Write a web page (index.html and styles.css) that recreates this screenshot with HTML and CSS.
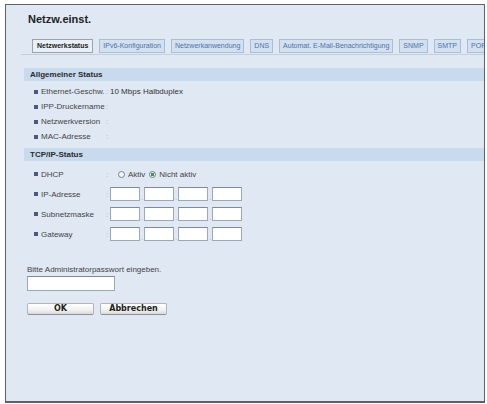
FILE: index.html
```html
<!DOCTYPE html>
<html lang="de">
<head>
    <meta charset="UTF-8">
    <title>Netzw.einst.</title>
    <link rel="stylesheet" href="styles.css">
</head>
<body>
    <div class="frame">
        <h1 class="page-title">Netzw.einst.</h1>

        <ul class="tabs">
            <li class="tab active">Netzwerkstatus</li>
            <li class="tab">IPv6-Konfiguration</li>
            <li class="tab">Netzwerkanwendung</li>
            <li class="tab">DNS</li>
            <li class="tab">Automat. E-Mail-Benachrichtigung</li>
            <li class="tab">SNMP</li>
            <li class="tab">SMTP</li>
            <li class="tab">POP3</li>
        </ul>

        <div class="section-head">Allgemeiner Status</div>
        <div class="rows">
            <div class="row">
                <span class="label">Ethernet-Geschw.</span>
                <span class="sep">:</span>
                <span class="value">10 Mbps Halbduplex</span>
            </div>
            <div class="row">
                <span class="label">IPP-Druckername</span>
                <span class="sep">:</span>
                <span class="value"></span>
            </div>
            <div class="row">
                <span class="label">Netzwerkversion</span>
                <span class="sep">:</span>
                <span class="value"></span>
            </div>
            <div class="row">
                <span class="label">MAC-Adresse</span>
                <span class="sep">:</span>
                <span class="value"></span>
            </div>
        </div>

        <div class="section-head section-next">TCP/IP-Status</div>
        <div class="rows">
            <div class="row row-radio">
                <span class="label">DHCP</span>
                <span class="sep">:</span>
                <span class="value radios">
                    <span class="radio"></span><span class="radio-text">Aktiv</span>
                    <span class="radio checked"></span><span class="radio-text">Nicht aktiv</span>
                </span>
            </div>
            <div class="row row-input">
                <span class="label">IP-Adresse</span>
                <span class="sep">:</span>
                <span class="value octets">
                    <input class="octet" type="text"><span class="dot">.</span><input class="octet" type="text"><span class="dot">.</span><input class="octet" type="text"><span class="dot">.</span><input class="octet" type="text">
                </span>
            </div>
            <div class="row row-input">
                <span class="label">Subnetzmaske</span>
                <span class="sep">:</span>
                <span class="value octets">
                    <input class="octet" type="text"><span class="dot">.</span><input class="octet" type="text"><span class="dot">.</span><input class="octet" type="text"><span class="dot">.</span><input class="octet" type="text">
                </span>
            </div>
            <div class="row row-input">
                <span class="label">Gateway</span>
                <span class="sep">:</span>
                <span class="value octets">
                    <input class="octet" type="text"><span class="dot">.</span><input class="octet" type="text"><span class="dot">.</span><input class="octet" type="text"><span class="dot">.</span><input class="octet" type="text">
                </span>
            </div>
        </div>

        <div class="login">
            <label class="login-label" for="pw">Bitte Administratorpasswort eingeben.</label>
            <input class="login-input" id="pw" type="password">
            <div class="actions">
                <button class="btn" type="button">OK</button>
                <button class="btn" type="button">Abbrechen</button>
            </div>
        </div>
    </div>
</body>
</html>
```

FILE: styles.css
```css
* {
    margin: 0;
    padding: 0;
    box-sizing: border-box;
}

body {
    background: #fff;
    font-family: "Liberation Sans", Arial, sans-serif;
    font-size: 8px;
    color: #333;
}

.frame {
    margin: 4px 0 0 5px;
    width: 480px;
    height: 399px;
    border: 1px solid #5d6066;
    border-bottom-width: 2px;
    background: #dfe8f3;
    overflow: hidden;
}

.page-title {
    margin: 8px 0 0 22px;
    font-size: 11px;
    line-height: 13px;
    font-weight: bold;
    color: #222;
}

/* tab strip, runs past the right edge of the frame */
.tabs {
    list-style: none;
    display: flex;
    gap: 6px;
    margin: 13px 0 0 15px;
    padding: 0 0 1px 11px;
    border-bottom: 1px solid #c4cfdc;
    white-space: nowrap;
    font-size: 7px;
}

.tab {
    flex: none;
    height: 14px;
    line-height: 12px;
    padding: 0 3px;
    border: 1px solid #a9bdd6;
    background: #d2e0ef;
    color: #4d73ad;
}

.tab.active {
    padding: 0 4px;
    background: #e9eff7;
    border-color: #9aa3ae;
    color: #222;
    font-weight: bold;
}

.section-head {
    margin: 13px 0 0 18px;
    height: 13px;
    line-height: 13px;
    padding-left: 6px;
    background: #c7daee;
    font-weight: bold;
    color: #2b2b2b;
}

.section-head.section-next {
    margin-top: 1px;
}

.rows {
    padding: 3px 0 3px 28px;
}

.row {
    display: flex;
    align-items: center;
    height: 15px;
}

.row-radio {
    height: 20px;
}

.row-input {
    height: 20px;
}

.label {
    width: 72px;
    display: flex;
    align-items: center;
    color: #444;
}

.label::before {
    content: "";
    width: 4px;
    height: 4px;
    margin-right: 3px;
    background: #4a5a7e;
}

.sep {
    width: 4px;
    color: #a9b2bd;
}

.value {
    display: flex;
    align-items: center;
    color: #333;
}

.radios {
    padding-left: 8px;
}

.radio {
    width: 7px;
    height: 7px;
    border: 1px solid #7a7f86;
    border-radius: 50%;
    background: #f4f6f8;
    margin-right: 3px;
}

.radio.checked {
    margin-left: 4px;
    border-color: #5c8d74;
    background: radial-gradient(circle, #4e8a69 0 1.5px, #e9f2ed 2px);
}

.radio-text {
    color: #444;
}

.octets {
    align-items: flex-end;
}

.octet {
    width: 30px;
    height: 14px;
    border: 1px solid #9ba8b7;
    border-top-color: #7f8a97;
    background: #fff;
}

.dot {
    width: 4px;
    text-align: center;
    line-height: 6px;
    color: #9aa4b0;
}

.login {
    padding: 18px 0 0 21px;
}

.login-label {
    display: block;
    line-height: 9px;
    color: #444;
}

.login-input {
    display: block;
    margin-top: 2px;
    width: 88px;
    height: 15px;
    border: 1px solid #9ba8b7;
    border-top-color: #7f8a97;
    background: #fff;
}

.actions {
    display: flex;
    gap: 6px;
    margin-top: 12px;
}

.btn {
    width: 67px;
    height: 12px;
    border: 1px solid #b2b5b9;
    border-bottom-color: #8c9096;
    border-radius: 2px;
    background: linear-gradient(#ffffff, #f1f1f1 60%, #d9dadc);
    font-family: "DejaVu Sans", sans-serif;
    font-size: 8px;
    font-weight: bold;
    line-height: 10px;
    color: #222;
}
```
